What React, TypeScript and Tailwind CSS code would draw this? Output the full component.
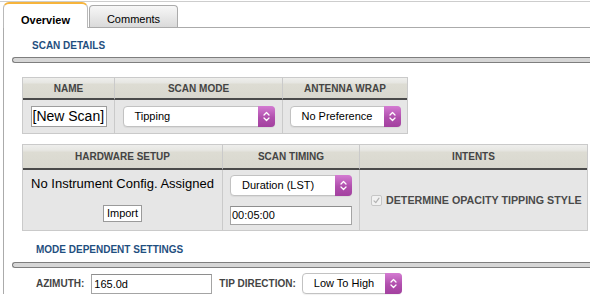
import React from 'react';

// Small stacked up/down chevrons used on the purple select handles
const Chevrons: React.FC = () => (
  <svg width="9" height="13" viewBox="0 0 9 13" fill="none" stroke="white" strokeWidth="1.3" strokeLinecap="round" strokeLinejoin="round">
    <path d="M2 5 L4.5 2.5 L7 5" />
    <path d="M2 8 L4.5 10.5 L7 8" />
  </svg>
);

interface SelectProps {
  value: string;
  className: string;
}

const FakeSelect: React.FC<SelectProps> = ({ value, className }) => (
  <div className={`flex h-[21px] items-stretch rounded-[4px] border border-[#c2c2c2] bg-white shadow-[0_1px_1px_rgba(0,0,0,0.06)] ${className}`}>
    <span className="flex-1 truncate pl-[11px] text-[11px] leading-[19px] text-black">{value}</span>
    <span className="-my-px -mr-px flex w-[17px] items-center justify-center rounded-r-[4px] bg-[linear-gradient(#d47bd2,#b04fad_55%,#a3409f)]">
      <Chevrons />
    </span>
  </div>
);

const headerBg = 'bg-[linear-gradient(#eeeeec_0%,#e7e7e3_22%,#dddcd3_32%,#d9d8cf_100%)]';

const SectionTitle: React.FC<{ label: string; className: string }> = ({ label, className }) => (
  <div className={`text-[10px] leading-[12px] font-bold text-[#1f4f80] ${className}`}>{label}</div>
);

const Divider: React.FC<{ className: string }> = ({ className }) => (
  <div className={`ml-[8px] h-[6px] rounded-l-full border border-r-0 border-[#7e7e7e] bg-[#d6d6d6] ${className}`}></div>
);

const App: React.FC = () => {
  return (
    <div className="h-[296px] w-[590px] overflow-hidden bg-white font-['Liberation_Sans',Arial,sans-serif] text-black">
      <div className="mt-px border-t border-[#cdcdcd]">
        {/* TABS */}
        <div className="flex h-[25px] items-end pl-[3px]">
          <div className="relative z-10 -mb-px h-[26px] w-[85px] rounded-t-[6px] border-x border-t-2 border-x-[#b9b9b9] border-t-[#f6b43c] bg-white pt-[10px] text-center text-[11px] leading-[13px] font-bold">
            Overview
          </div>
          <div className="ml-px h-[22px] w-[89px] rounded-t-[4px] border border-b-0 border-[#ababab] bg-[linear-gradient(#f7f7f7,#dadada)] pt-[7px] text-center text-[11px] leading-[13px]">
            Comments
          </div>
        </div>

        {/* PANEL */}
        <div className="ml-[3px] border-t border-l border-[#ababab] pt-[12px]">
          <SectionTitle label="SCAN DETAILS" className="pl-[28px]" />
          <Divider className="mt-[5px]" />

          {/* TABLE 1 */}
          <div className="mt-[14px] ml-[18px] grid w-fit grid-cols-[91px_168px_125px] border border-[#cacaca] bg-[#e6e6e6] text-[10px] font-bold text-[#444]">
            <div className={`flex h-[22px] items-center justify-center border-b-2 border-b-[#4a4a4a] ${headerBg}`}>NAME</div>
            <div className={`flex h-[22px] items-center justify-center border-b-2 border-l border-b-[#4a4a4a] border-l-[#cacaca] ${headerBg}`}>SCAN MODE</div>
            <div className={`flex h-[22px] items-center justify-center border-b-2 border-l border-b-[#4a4a4a] border-l-[#cacaca] ${headerBg}`}>ANTENNA WRAP</div>

            <div className="flex h-[33px] items-center justify-center">
              <div className="h-[21px] w-[76px] border border-[#9d9d9d] bg-white pl-px text-[14px] leading-[19px] font-normal text-black">[New Scan]</div>
            </div>
            <div className="flex h-[33px] items-center justify-center border-l border-[#cacaca] font-normal">
              <FakeSelect value="Tipping" className="w-[152px]" />
            </div>
            <div className="flex h-[33px] items-center justify-center border-l border-[#cacaca] font-normal">
              <FakeSelect value="No Preference" className="w-[111px]" />
            </div>
          </div>

          {/* TABLE 2 */}
          <div className="mt-[10px] ml-[18px] grid w-fit grid-cols-[199px_137px_228px] border border-[#cacaca] bg-[#e6e6e6] text-[10px] font-bold text-[#444]">
            <div className={`flex h-[25px] items-center justify-center border-b-2 border-b-[#4a4a4a] ${headerBg}`}>HARDWARE SETUP</div>
            <div className={`flex h-[25px] items-center justify-center border-b-2 border-l border-b-[#4a4a4a] border-l-[#cacaca] ${headerBg}`}>SCAN TIMING</div>
            <div className={`flex h-[25px] items-center justify-center border-b-2 border-l border-b-[#4a4a4a] border-l-[#cacaca] ${headerBg}`}>INTENTS</div>

            <div className="flex h-[60px] flex-col items-center pt-[6px] font-normal text-black">
              <span className="text-[13px] leading-[15px]">No Instrument Config. Assigned</span>
              <span className="mt-[14px] flex h-[17px] w-[39px] items-center justify-center border border-[#9a9a9a] bg-white text-[11px]">Import</span>
            </div>
            <div className="flex h-[60px] flex-col items-center border-l border-[#cacaca] pt-[5px] font-normal">
              <FakeSelect value="Duration (LST)" className="w-[122px]" />
              <div className="mt-[10px] h-[19px] w-[122px] border border-[#a4a4a4] border-t-[#8e8e8e] bg-white pl-px text-[11px] leading-[17px] text-black">00:05:00</div>
            </div>
            <div className="flex h-[60px] items-center border-l border-[#cacaca] pl-[11px]">
              <span className="flex h-[11px] w-[11px] items-center justify-center rounded-[2px] border border-[#c6c6c6] bg-[#f1f1f1]">
                <svg width="9" height="9" viewBox="0 0 9 9" fill="none" stroke="#b3b3b3" strokeWidth="1.2" strokeLinecap="round" strokeLinejoin="round">
                  <path d="M2 4.8 L3.8 6.6 L7 2.2" />
                </svg>
              </span>
              <span className="ml-[4px] text-[10.7px] text-[#4a4a4a]">DETERMINE OPACITY TIPPING STYLE</span>
            </div>
          </div>

          <SectionTitle label="MODE DEPENDENT SETTINGS" className="mt-[13px] pl-[32px]" />
          <Divider className="mt-[6px]" />

          {/* AZIMUTH / TIP DIRECTION */}
          <div className="mt-[5px] flex items-center pl-[32px] text-[10px] font-bold text-[#444]">
            <span>AZIMUTH:</span>
            <div className="ml-[7px] h-[20px] w-[121px] border border-[#a4a4a4] border-t-[#8e8e8e] bg-white pl-[2px] text-[11px] leading-[18px] font-normal text-black">165.0d</div>
            <span className="ml-[7px]">TIP DIRECTION:</span>
            <FakeSelect value="Low To High" className="ml-[6px] w-[100px] font-normal" />
          </div>
        </div>
      </div>
    </div>
  );
};

export default App;
